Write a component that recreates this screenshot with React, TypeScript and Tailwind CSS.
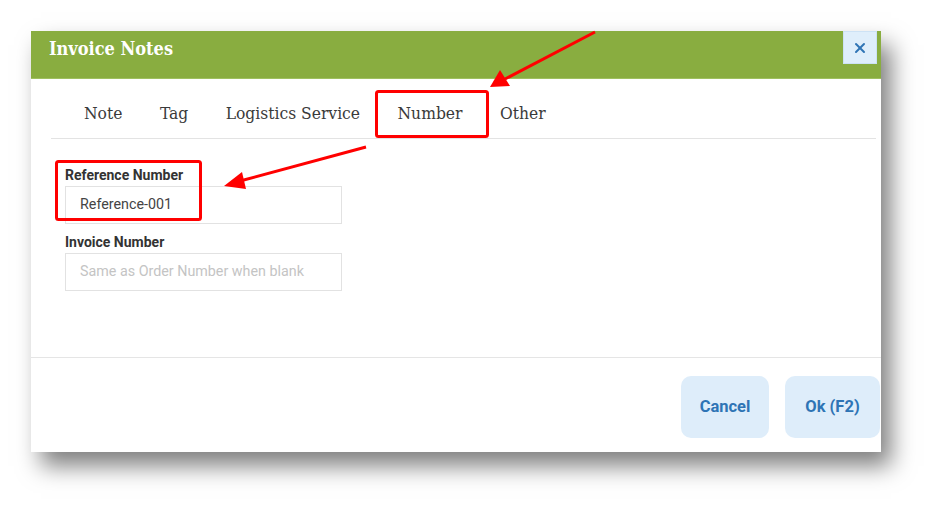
import { X } from 'lucide-react';

const tabs = ['Note', 'Tag', 'Logistics Service', 'Number', 'Other'];
const slab = { fontFamily: '"DejaVu Serif Condensed", "DejaVu Serif", serif', fontStretch: 'condensed' };

export default function App() {
  return (
    <div className="relative w-[943px] h-[515px] bg-white overflow-hidden" style={{ fontFamily: 'Roboto, sans-serif' }}>
      <div className="ml-[31px] mt-[31px] w-[850px] h-[421px] bg-white flex flex-col shadow-[10px_14px_22px_rgba(0,0,0,0.5)]">
        {/* Header */}
        <div className="h-[48px] bg-[#89ad40] flex items-start justify-between pl-[18px] pr-[4px] border-b border-[#9fc060]">
          <h1 className="mt-[4px] text-white text-[18px] font-bold" style={slab}>
            Invoice Notes
          </h1>
          <button className="w-[34px] h-[33px] bg-[#dfeefb] border border-[#cde2f5] flex items-center justify-center text-[#2f74b5]">
            <X size={16} strokeWidth={3} />
          </button>
        </div>

        {/* Tabs */}
        <div className="ml-[20px] mr-[5px] mt-[11px] pl-[14px] flex border-b border-[#e3e3e3]" style={slab}>
          {tabs.map((t) => (
            <div key={t} className="h-[48px] pl-[19px] pr-[18.5px] flex items-center text-[17.3px] text-[#3a3a3a]">
              {t}
            </div>
          ))}
        </div>

        {/* Form */}
        <div className="flex-1 pl-[34px] pt-[27px]">
          <label className="block text-[14px] leading-[18px] font-bold text-[#333]">Reference Number</label>
          <div className="mt-[2px] w-[277px] h-[38px] border border-[#e2e2e2] flex items-center pl-[14px] text-[14.3px] text-[#444]">
            Reference-001
          </div>
          <label className="block mt-[9px] text-[14px] leading-[18px] font-bold text-[#333]">Invoice Number</label>
          <div className="mt-[2px] w-[277px] h-[38px] border border-[#e2e2e2] flex items-center pl-[14px] text-[14.3px] text-[#c4c4c4]">
            Same as Order Number when blank
          </div>
        </div>

        {/* Footer */}
        <div className="h-[95px] border-t border-[#e5e5e5] flex justify-end items-start pt-[18px] gap-[16px] pr-[1px]">
          <button className="w-[88px] h-[62px] rounded-[10px] bg-[#deedfa] text-[#2e74b5] text-[16.5px] font-bold">Cancel</button>
          <button className="w-[95px] h-[62px] rounded-[10px] bg-[#deedfa] text-[#2e74b5] text-[16.5px] font-bold">Ok (F2)</button>
        </div>
      </div>

      {/* Annotations */}
      <svg className="absolute inset-0 pointer-events-none" width="943" height="515" viewBox="0 0 943 515">
        <rect x="376.5" y="91.5" width="111" height="45" rx="2" fill="none" stroke="#ff0000" strokeWidth="3" />
        <rect x="56.5" y="161.5" width="144" height="58" rx="2" fill="none" stroke="#ff0000" strokeWidth="3" />
        <line x1="595" y1="32" x2="505" y2="79" stroke="#ff0000" strokeWidth="3" />
        <polygon points="490,87 500,70 510,86" fill="#ff0000" />
        <line x1="366" y1="147" x2="240" y2="181" stroke="#ff0000" strokeWidth="3" />
        <polygon points="224,186 242,172 246,189" fill="#ff0000" />
      </svg>
    </div>
  );
}
